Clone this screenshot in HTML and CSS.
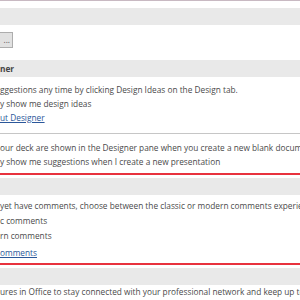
FILE: index.html
```
<!DOCTYPE html>
<html lang="en">
<head>
  <meta charset="UTF-8" />
  <title>PowerPoint Options</title>
  <link rel="stylesheet" href="styles.css">
</head>
<body>
  <div class="options">
    <div class="top-rule"></div>
    <div class="band"></div>
    <div class="btn-row"><button class="btn">...</button></div>

    <div class="band band-title">ner</div>
    <div class="group">
      <p class="line">ggestions any time by clicking Design Ideas on the Design tab.</p>
      <p class="line">y show me design ideas</p>
      <p class="line"><a href="#" class="link">ut Designer</a></p>
    </div>
    <div class="sep"></div>
    <div class="group group-tight">
      <p class="line">our deck are shown in the Designer pane when you create a new blank document</p>
      <p class="line">y show me suggestions when I create a new presentation</p>
    </div>
    <div class="red-rule"></div>

    <div class="band"></div>
    <div class="group group-comments">
      <p class="line">yet have comments, choose between the classic or modern comments experience</p>
      <p class="line">c comments</p>
      <p class="line">rn comments</p>
      <p class="line line-link"><a href="#" class="link">omments</a></p>
    </div>
    <div class="red-rule red-rule-tight"></div>

    <div class="band"></div>
    <div class="group group-last">
      <p class="line">ures in Office to stay connected with your professional network and keep up to date</p>
    </div>
  </div>
</body>
</html>
```

FILE: styles.css
```
* { box-sizing: border-box; }
body {
  margin: 0;
  font-family: 'Segoe UI', 'Open Sans', sans-serif;
  font-size: 8.3px;
  color: #4a4a4a;
  background: #fff;
}
.options {
  width: 300px;
  height: 300px;
  overflow: hidden;
}
.top-rule {
  height: 1px;
  background: #c8b9c2;
  margin-bottom: 7px;
}
.band {
  height: 17px;
  background: #e9e9e9;
}
.band-title {
  font-weight: bold;
  line-height: 17px;
  color: #444;
}
.btn-row {
  padding: 7px 0 12px;
  height: 35px;
}
.btn {
  display: block;
  width: 30px;
  height: 16px;
  margin-left: -17px;
  padding: 0 2px 0 0;
  text-align: right;
  font: 8.3px 'Segoe UI', 'Open Sans', sans-serif;
  line-height: 12px;
  color: #555;
  background: #e1e1e1;
  border: 1px solid #adadad;
}
.group { padding-top: 6px; }
.line {
  margin: 0;
  height: 14px;
  line-height: 14px;
  white-space: nowrap;
}
.link {
  color: #2b579a;
  text-decoration: underline;
}
.sep {
  height: 1px;
  background: #c6c6c6;
  margin-top: 8px;
}
.group-tight { padding-top: 7px; }
.red-rule {
  height: 2px;
  background: #e8323e;
  margin: 4px 0 3px;
}
.red-rule-tight { margin-top: 3px; }
.group-comments { padding-top: 3px; }
.group-comments .line { height: 15px; line-height: 15px; }
.group-comments .line-link { margin-top: 2px; }
.group-last { padding-top: 0; }
```
